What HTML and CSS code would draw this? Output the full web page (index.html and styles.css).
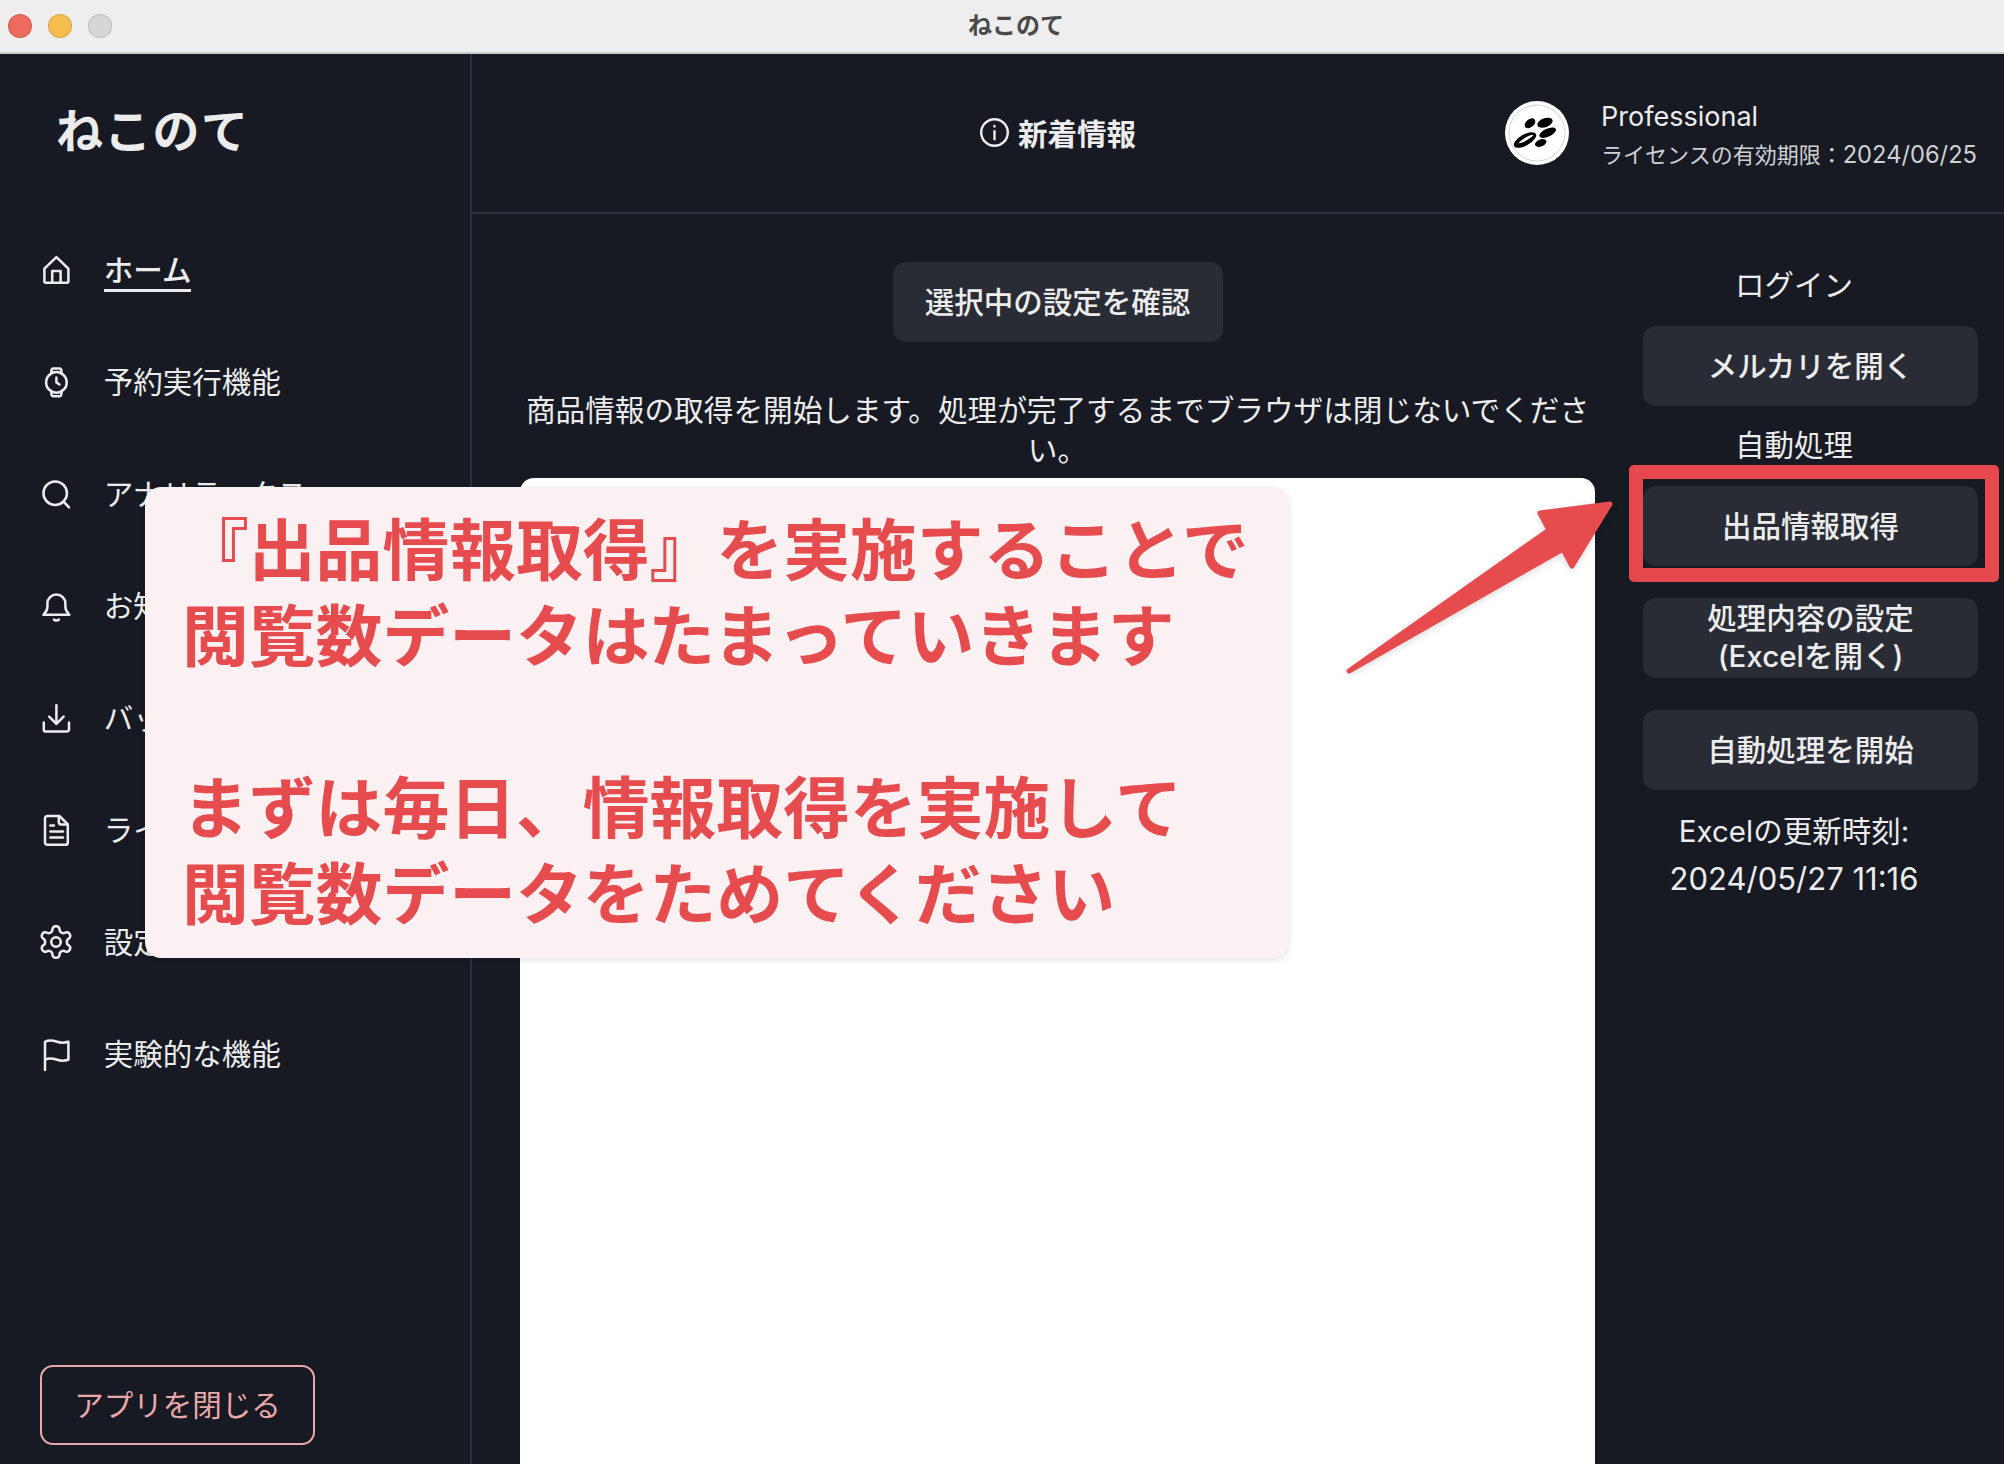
FILE: index.html
```html
<!DOCTYPE html>
<html lang="ja">
<head>
    <meta charset="UTF-8">
    <title>ねこのて</title>
    <link rel="stylesheet" href="styles.css">
</head>
<body>

<div class="screen">
    <div class="titlebar">
        <div class="lights">
            <span class="light red"></span>
            <span class="light yellow"></span>
            <span class="light gray"></span>
        </div>
        <div class="window-title">ねこのて</div>
    </div>

    <div class="app">
        <div class="sidebar">
            <div class="logo">ねこのて</div>
            <div class="nav">
                <div class="nav-item">
                    <svg class="icon" viewBox="0 0 24 24"><path d="M2 10.500 12 1l10 9.500V21a1.200 1.200 0 0 1-1.200 1.200H3.200A1.200 1.200 0 0 1 2 21z"/><path d="M8.500 22v-9.500h7V22"/></svg>
                    <span class="nav-label current">ホーム</span>
                </div>
                <div class="nav-item">
                    <svg class="icon" viewBox="0 0 24 24"><circle cx="12" cy="12" r="8.600"/><path d="M12 8V12l2.500 1.700"/><path d="M7.500 5 8 1.800A1.200 1.200 0 0 1 9.200.5h5.600A1.200 1.200 0 0 1 16 1.800L16.500 5"/><path d="M7.500 19 8 22.200a1.200 1.200 0 0 0 1.200 1.300h5.600a1.200 1.200 0 0 0 1.200-1.300l.5-3.200"/></svg>
                    <span class="nav-label">予約実行機能</span>
                </div>
                <div class="nav-item">
                    <svg class="icon" viewBox="0 0 24 24"><circle cx="11" cy="11" r="9.800"/><path d="m18 18 4.500 4.800"/></svg>
                    <span class="nav-label">アナリティクス</span>
                </div>
                <div class="nav-item">
                    <svg class="icon" viewBox="0 0 24 24"><path d="M1.200 19h21.600c-2-2-3.300-3.500-3.300-6.500V9.500a7.500 7.500 0 0 0-15 0v3c0 3-1.300 4.500-3.300 6.500z"/><path d="M10 23c.8 1 3.200 1 4 0"/></svg>
                    <span class="nav-label">お知らせ</span>
                </div>
                <div class="nav-item">
                    <svg class="icon" viewBox="0 0 24 24"><path d="M12 1v15"/><path d="m6 10.500 6 6 6-6"/><path d="M1.500 15.500v5.700a1.800 1.800 0 0 0 1.800 1.800h17.400a1.800 1.800 0 0 0 1.800-1.800v-5.700"/></svg>
                    <span class="nav-label">バックアップ</span>
                </div>
                <div class="nav-item">
                    <svg class="icon" viewBox="0 0 24 24"><path d="M4.500 0h10l7 7v15a2 2 0 0 1-2 2h-15a2 2 0 0 1-2-2V2a2 2 0 0 1 2-2z"/><path d="M14 .5V5a2 2 0 0 0 2 2h5"/><path d="M7 8h3M7 13h10.500M7 18h10.500"/></svg>
                    <span class="nav-label">ライセンス</span>
                </div>
                <div class="nav-item">
                    <svg class="icon gear" viewBox="0 0 24 24"><path d="M12.220 2h-.44a2 2 0 0 0-2 2v.18a2 2 0 0 1-1 1.730l-.43.25a2 2 0 0 1-2 0l-.15-.08a2 2 0 0 0-2.730.73l-.22.38a2 2 0 0 0 .73 2.730l.15.1a2 2 0 0 1 1 1.720v.51a2 2 0 0 1-1 1.740l-.15.09a2 2 0 0 0-.73 2.730l.22.38a2 2 0 0 0 2.730.73l.15-.08a2 2 0 0 1 2 0l.43.25a2 2 0 0 1 1 1.730V20a2 2 0 0 0 2 2h.44a2 2 0 0 0 2-2v-.18a2 2 0 0 1 1-1.730l.43-.25a2 2 0 0 1 2 0l.15.08a2 2 0 0 0 2.730-.73l.22-.39a2 2 0 0 0-.73-2.730l-.15-.08a2 2 0 0 1-1-1.740v-.5a2 2 0 0 1 1-1.740l.15-.09a2 2 0 0 0 .73-2.730l-.22-.38a2 2 0 0 0-2.730-.73l-.15.08a2 2 0 0 1-2 0l-.43-.25a2 2 0 0 1-1-1.730V4a2 2 0 0 0-2-2z"/><circle cx="12" cy="12" r="3"/></svg>
                    <span class="nav-label">設定</span>
                </div>
                <div class="nav-item">
                    <svg class="icon" viewBox="0 0 24 24"><path d="M2.500 25V1.500c4-2 7-1 10 0s6 1 9.500 0v15c-3.500 1-6.500 1-9.500 0s-6-2-10 0"/></svg>
                    <span class="nav-label">実験的な機能</span>
                </div>
            </div>
            <div class="close-btn">アプリを閉じる</div>
        </div>

        <div class="main">
            <div class="header">
                <div class="news">
                    <svg class="news-icon" viewBox="0 0 24 24"><circle cx="12" cy="12" r="11"/><path d="M12 11v6.500"/><path d="M12 6.500v.5"/></svg>
                    <span>新着情報</span>
                </div>
                <div class="account">
                    <svg class="avatar" viewBox="0 0 64 64">
                        <circle cx="32" cy="32" r="32" fill="#fff"/>
                        <circle cx="32" cy="32" r="28" fill="none" stroke="#c8c8c8" stroke-width="0.800"/>
                        <ellipse cx="25" cy="22.300" rx="6" ry="4" transform="rotate(-40 25 22.300)"/>
                        <ellipse cx="40" cy="21.700" rx="8" ry="4.500" transform="rotate(-20 40 21.700)"/>
                        <ellipse cx="42.700" cy="31.700" rx="9" ry="4" transform="rotate(-25 42.700 31.700)"/>
                        <ellipse cx="35.700" cy="42" rx="6" ry="3.500" transform="rotate(-20 35.700 42)"/>
                        <ellipse cx="20" cy="39" rx="12.500" ry="5.500" transform="rotate(-30 20 39)"/>
                        <ellipse cx="21" cy="38" rx="8" ry="1.500" fill="#fff" transform="rotate(-30 21 38)"/>
                    </svg>
                    <div class="account-text">
                        <div class="plan">Professional</div>
                        <div class="license"><span class="license-jp">ライセンスの有効期限：</span>2024/06/25</div>
                    </div>
                </div>
            </div>

            <div class="content">
                <div class="center">
                    <div class="btn confirm-btn">選択中の設定を確認</div>
                    <div class="message">商品情報の取得を開始します。処理が完了するまでブラウザは閉じないでください。</div>
                    <div class="log-panel"></div>
                </div>
                <div class="side">
                    <div class="side-label">ログイン</div>
                    <div class="btn side-btn">メルカリを開く</div>
                    <div class="side-label second">自動処理</div>
                    <div class="btn side-btn">出品情報取得</div>
                    <div class="btn side-btn two-line">処理内容の設定<br>(Excelを開く)</div>
                    <div class="btn side-btn">自動処理を開始</div>
                    <div class="updated">
                        <div>Excelの更新時刻:</div>
                        <div class="updated-time">2024/05/27 11:16</div>
                    </div>
                </div>
            </div>
        </div>
    </div>

    <!-- 説明の注釈 -->
    <div class="callout">
        <div>『出品情報取得』を実施することで</div>
        <div>閲覧数データはたまっていきます</div>
        <div>&nbsp;</div>
        <div>まずは毎日、情報取得を実施して</div>
        <div>閲覧数データをためてください</div>
    </div>
    <div class="red-box"></div>
    <svg class="arrow" viewBox="0 0 2004 1464">
        <path d="M1349 671 1549 530 1540 513 1610 504 1572 566 1563 549z"/>
    </svg>
</div>

</body>
</html>
```

FILE: styles.css
```css
* {
    box-sizing: border-box;
}

body {
    margin: 0;
    font-family: "Inter", "Noto Sans CJK JP", sans-serif;
    color: #ececec;
    background-color: #171a23;
}

.screen {
    width: 2004px;
    height: 1464px;
    position: relative;
    overflow: hidden;
}

/* タイトルバー */
.titlebar {
    height: 54px;
    display: flex;
    align-items: center;
    justify-content: center;
    padding: 0 0 5px 28px;
    position: relative;
    background-color: #eeeeee;
    border-bottom: 2px solid #c8c8c8;
}

.lights {
    display: flex;
    gap: 16px;
    position: absolute;
    left: 8px;
    top: 14px;
}

.light {
    width: 24px;
    height: 24px;
    border-radius: 50%;
    border: 1px solid rgba(0, 0, 0, 0.12);
}

.light.red {
    background-color: #ee6a5f;
}

.light.yellow {
    background-color: #f5bd4f;
}

.light.gray {
    background-color: #d6d6d6;
}

.window-title {
    font-size: 24px;
    font-weight: 700;
    color: #4a4a4a;
}

.app {
    height: 1410px;
    display: flex;
}

/* サイドバー */
.sidebar {
    width: 472px;
    flex: none;
    display: flex;
    flex-direction: column;
    padding-bottom: 19px;
    border-right: 2px solid #2a3040;
}

.logo {
    height: 147px;
    padding-left: 56px;
    display: flex;
    align-items: center;
    font-size: 47px;
    font-weight: 700;
    letter-spacing: 1.300px;
}

.nav {
    margin-top: 13px;
}

.nav-item {
    height: 112px;
    display: flex;
    align-items: center;
    gap: 33.500px;
    padding-left: 41.500px;
}

.icon {
    width: 28.800px;
    height: 28.800px;
    flex: none;
    fill: none;
    stroke: #ececec;
    stroke-width: 2.100;
    stroke-linecap: round;
    stroke-linejoin: round;
    overflow: visible;
}

.icon.gear {
    width: 38px;
    height: 38px;
    margin: 0 -4.600px;
    stroke-width: 1.600;
}

.nav-label {
    font-size: 29.500px;
    line-height: 37px;
    white-space: nowrap;
}

.nav-label.current {
    font-weight: 500;
    box-shadow: 0 3px 0 #ececec;
}

.close-btn {
    width: 275px;
    height: 80px;
    margin-top: auto;
    margin-left: 40px;
    padding-bottom: 4px;
    display: flex;
    align-items: center;
    justify-content: center;
    font-size: 29.500px;
    color: #eba8a8;
    border: 2px solid #eba8a8;
    border-radius: 13px;
}

/* メイン */
.main {
    flex: 1;
    display: flex;
    flex-direction: column;
    min-width: 0;
}

.header {
    height: 160px;
    flex: none;
    display: flex;
    align-items: center;
    padding-left: 508px;
    padding-right: 27px;
    border-bottom: 2px solid #2a3040;
}

.news {
    display: flex;
    align-items: center;
    gap: 9px;
    padding-bottom: 2px;
    font-size: 29.500px;
    font-weight: 700;
}

.news-icon {
    width: 29px;
    height: 29px;
    fill: none;
    stroke: #ececec;
    stroke-width: 2;
    stroke-linecap: round;
}

.account {
    margin-left: auto;
    display: flex;
    align-items: center;
    gap: 32px;
}

.avatar {
    width: 64px;
    height: 64px;
    flex: none;
}

.account-text {
    padding-top: 5px;
}

.plan {
    font-size: 27px;
    line-height: 38px;
}

.license {
    font-size: 23.700px;
    line-height: 38px;
    color: #cfd0d2;
}

.license-jp {
    font-size: 22px;
}

.content {
    flex: 1;
    display: flex;
    min-height: 0;
}

.center {
    width: 1138px;
    flex: none;
    display: flex;
    flex-direction: column;
    align-items: center;
    padding: 48px 15px 0 48px;
}

.btn {
    height: 80px;
    padding-bottom: 4px;
    display: flex;
    align-items: center;
    justify-content: center;
    text-align: center;
    font-size: 29.500px;
    font-weight: 500;
    background-color: #292c35;
    border-radius: 13px;
}

.confirm-btn {
    width: 330px;
    flex: none;
}

.message {
    margin-top: 48px;
    font-size: 29.650px;
    line-height: 40px;
    text-align: center;
}

.log-panel {
    width: 100%;
    flex: 1;
    margin-top: 8px;
    background-color: #ffffff;
    border-radius: 14px 14px 0 0;
}

/* 右カラム */
.side {
    width: 368px;
    flex: none;
    padding-top: 51px;
    display: flex;
    flex-direction: column;
}

.side-label {
    margin-bottom: 20px;
    font-size: 29.500px;
    line-height: 41px;
    text-align: center;
}

.side-label.second {
    margin-top: -13px;
}

.side-btn {
    width: 335px;
    flex: none;
    margin-left: auto;
    margin-bottom: 32px;
}

.two-line {
    padding-bottom: 2px;
    line-height: 38px;
}

.updated {
    margin-top: -15px;
    font-size: 29.500px;
    line-height: 48px;
    text-align: center;
}

.updated-time {
    font-size: 31px;
}

/* 注釈(スクショの上に載せたもの) */
.callout {
    position: absolute;
    left: 145px;
    top: 487px;
    width: 1144px;
    height: 471px;
    padding: 21px 0 0 37px;
    font-size: 66.800px;
    font-weight: 700;
    line-height: 86px;
    color: #e64b4e;
    white-space: nowrap;
    background-color: #fbf1f2;
    border-radius: 16px;
    box-shadow: 0 2px 6px rgba(0, 0, 0, 0.12);
}

.red-box {
    position: absolute;
    left: 1629px;
    top: 465px;
    width: 370px;
    height: 117px;
    border: 14px solid #e5484d;
    border-radius: 5px;
}

.arrow {
    position: absolute;
    left: 0;
    top: 0;
    width: 2004px;
    height: 1464px;
    fill: #e64b4e;
    stroke: #e64b4e;
    stroke-width: 5;
    stroke-linejoin: round;
    filter: drop-shadow(0 2px 3px rgba(0, 0, 0, 0.15));
}
```
